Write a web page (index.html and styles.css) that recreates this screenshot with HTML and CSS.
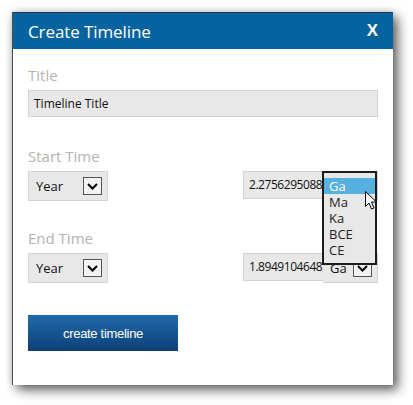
FILE: index.html
```html
<!DOCTYPE html>
<html>
<head>
<meta charset="utf-8">
<link rel="stylesheet" href="styles.css">
</head>
<body>
<div class="dialog">
  <div class="header">
    <span class="header-title">Create Timeline</span>
    <span class="close">X</span>
  </div>
  <div class="body">
    <div class="label label-title">Title</div>
    <div class="textbox">Timeline Title</div>

    <div class="label label-start">Start Time</div>
    <div class="row">
      <div class="select year"><span>Year</span><span class="arrow"><svg width="11" height="7" viewBox="0 0 11 7"><path d="M1 1 L5.5 5.5 L10 1" fill="none" stroke="#000" stroke-width="2"/></svg></span></div>
      <div class="spacer"></div>
      <div class="number">2.2756295088</div>
      <div class="select unit"><span>Ga</span><span class="arrow"><svg width="11" height="7" viewBox="0 0 11 7"><path d="M1 1 L5.5 5.5 L10 1" fill="none" stroke="#000" stroke-width="2"/></svg></span>
        <ul class="list">
          <li class="sel">Ga</li>
          <li>Ma</li>
          <li>Ka</li>
          <li>BCE</li>
          <li>CE</li>
        </ul>
        <svg class="cursor" width="13" height="20" viewBox="0 0 13 20"><path d="M0.5 0.5 L0.5 15.5 L4 12 L6.5 18 L9 17 L6.5 11 L11.5 11 Z" fill="#fff" stroke="#000" stroke-width="1" stroke-linejoin="round"/></svg>
      </div>
    </div>

    <div class="label label-end">End Time</div>
    <div class="row">
      <div class="select year"><span>Year</span><span class="arrow"><svg width="11" height="7" viewBox="0 0 11 7"><path d="M1 1 L5.5 5.5 L10 1" fill="none" stroke="#000" stroke-width="2"/></svg></span></div>
      <div class="spacer"></div>
      <div class="number">1.8949104648</div>
      <div class="select unit"><span>Ga</span><span class="arrow"><svg width="11" height="7" viewBox="0 0 11 7"><path d="M1 1 L5.5 5.5 L10 1" fill="none" stroke="#000" stroke-width="2"/></svg></span></div>
    </div>

    <button class="create">create timeline</button>
  </div>
</div>
</body>
</html>
```

FILE: styles.css
```css
html, body {
  margin: 0;
  padding: 0;
  background: #fff;
}
body {
  width: 413px;
  height: 405px;
  overflow: hidden;
  font-family: "Open Sans", "Noto Sans", sans-serif;
}
.dialog {
  margin: 12px 0 0 12px;
  width: 381px;
  height: 373px;
  box-sizing: border-box;
  background: #fff;
  border-left: 1px solid #4b5142;
  box-shadow: 5px 5px 11px rgba(0,0,0,0.6), 0 0 7px rgba(0,0,0,0.18);
}
.header {
  height: 37px;
  background: #0564a0;
  display: flex;
  align-items: center;
  justify-content: space-between;
  padding: 0 15px 0 15px;
  border-top: 1px solid #2b3a44;
  box-sizing: border-box;
  color: #fff;
}
.header-title {
  font-size: 17px;
  letter-spacing: -0.1px;
}
.close {
  font-family: "Liberation Sans", Arial, sans-serif;
  font-weight: bold;
  font-size: 17px;
}
.body {
  padding: 0 15px 0 15px;
}
.label {
  color: #b3b3b3;
  font-size: 15px;
  line-height: 20px;
}
.label-title { padding-top: 16px; }
.label-start { padding-top: 29px; }
.label-end { padding-top: 27px; }
.textbox {
  margin-top: 5px;
  height: 27px;
  box-sizing: border-box;
  background: #e8e8e8;
  border: 1px solid #d3d3d3;
  font-size: 12px;
  line-height: 25px;
  padding-left: 5px;
  color: #111;
}
.row {
  display: flex;
  align-items: flex-start;
  margin-top: 5px;
  font-size: 13px;
  color: #111;
}
.spacer { flex: 1; }
.select {
  position: relative;
  height: 30px;
  box-sizing: border-box;
  background: #e8e8e8;
  border: 1px solid #d3d3d3;
  display: flex;
  align-items: center;
  justify-content: space-between;
  padding: 0 5px 0 7px;
}
.year { width: 80px; }
.unit { width: 55px; border-left: none; }
.arrow {
  width: 19px;
  height: 18px;
  box-sizing: border-box;
  border: 1px solid #555;
  background: #f2f2f2;
  display: flex;
  align-items: center;
  justify-content: center;
}
.number {
  width: 80px;
  height: 28px;
  box-sizing: border-box;
  background: #e8e8e8;
  border: 1px solid #d3d3d3;
  border-right: none;
  line-height: 26px;
  padding-left: 5px;
  font-size: 12px;
  letter-spacing: -0.45px;
  white-space: nowrap;
  overflow: hidden;
}
.list {
  position: absolute;
  left: -1px;
  top: -1px;
  width: 55px;
  box-sizing: border-box;
  margin: 0;
  padding: 5px 0 5px 0;
  list-style: none;
  background: #e8e8e8;
  border: 2px solid #1c1c1c;
  z-index: 2;
}
.list li {
  height: 16px;
  line-height: 16px;
  padding-left: 5px;
  font-size: 13px;
  color: #222;
}
.list li.sel {
  background: #56b1e1;
  color: #fff;
}
.cursor {
  position: absolute;
  left: 42px;
  top: 19px;
  z-index: 3;
}
.create {
  display: block;
  margin-top: 32px;
  width: 150px;
  height: 36px;
  border: none;
  background: linear-gradient(#1f6cab, #0d3f76);
  color: #fff;
  font-family: "Liberation Sans", Arial, sans-serif;
  font-size: 13px;
  letter-spacing: -0.3px;
  padding: 0;
}
```
